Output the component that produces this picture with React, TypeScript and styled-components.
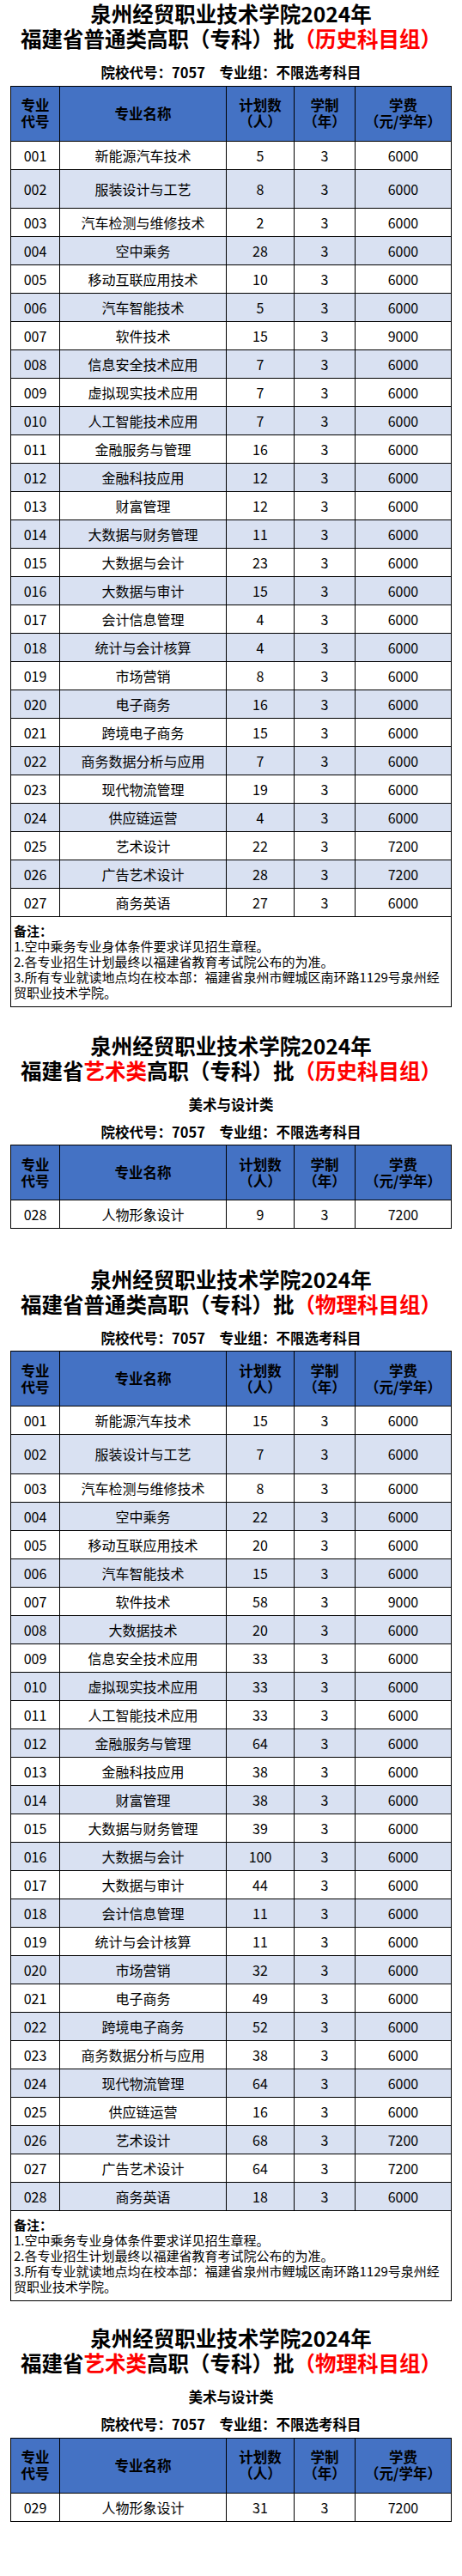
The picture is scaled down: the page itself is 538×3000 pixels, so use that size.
import { FC, ReactNode } from "react";
import styled, { createGlobalStyle } from "styled-components";

const GlobalStyle = createGlobalStyle`
  html, body {
    margin: 0;
    padding: 0;
    background: #fff;
  }
  body {
    font-family: "Noto Sans CJK SC", "Noto Sans", sans-serif;
    color: #000;
  }
`;

const Page = styled.div`
  width: 538px;
  padding-bottom: 68px;
`;

const Section = styled.section<{ $gap: number }>`
  margin-top: ${(p) => p.$gap}px;
`;

const Title = styled.h1`
  margin: 0;
  font-size: 24.5px;
  line-height: 29px;
  font-weight: 700;
  text-align: center;
  white-space: nowrap;
`;

const TitleLine = styled.div``;

const Red = styled.span`
  color: #ff0000;
`;

const Category = styled.div`
  margin-top: 13px;
  font-size: 16.5px;
  line-height: 24px;
  font-weight: 700;
  text-align: center;
`;

const Subtitle = styled.div<{ $afterCategory?: boolean }>`
  margin-top: ${(p) => (p.$afterCategory ? 8 : 13)}px;
  font-size: 16.5px;
  line-height: 24px;
  font-weight: 700;
  text-align: center;
  white-space: pre;
`;

const Table = styled.table`
  margin: 3.5px auto 0;
  width: 513px;
  table-layout: fixed;
  border-collapse: collapse;
`;

const HeadRow = styled.tr`
  height: 64px;
  background: #4472c4;
`;

const HeadCell = styled.th`
  border: 1px solid #000;
  padding: 0;
  font-size: 16.5px;
  line-height: 19px;
  font-weight: 700;
  text-align: center;
  vertical-align: middle;
`;

const Row = styled.tr<{ $shaded: boolean; $tall: boolean }>`
  height: ${(p) => (p.$tall ? 45.5 : 33)}px;
  background: ${(p) => (p.$shaded ? "#d9e1f2" : "#fff")};
`;

const Cell = styled.td`
  border: 1px solid #000;
  padding: 0;
  font-size: 16px;
  line-height: 20px;
  text-align: center;
  vertical-align: middle;
  white-space: nowrap;
`;

const NotesCell = styled.td`
  border: 1px solid #000;
  height: 105px;
  padding: 0 4px 0 3px;
  font-size: 15px;
  line-height: 18px;
  text-align: left;
  vertical-align: middle;
  box-sizing: border-box;
`;

const NotesHead = styled.div`
  font-weight: 700;
`;

const NoteLine = styled.div``;

type Major = [string, number, number];

const historyMajors: Major[] = [
  ["新能源汽车技术", 5, 6000],
  ["服装设计与工艺", 8, 6000],
  ["汽车检测与维修技术", 2, 6000],
  ["空中乘务", 28, 6000],
  ["移动互联应用技术", 10, 6000],
  ["汽车智能技术", 5, 6000],
  ["软件技术", 15, 9000],
  ["信息安全技术应用", 7, 6000],
  ["虚拟现实技术应用", 7, 6000],
  ["人工智能技术应用", 7, 6000],
  ["金融服务与管理", 16, 6000],
  ["金融科技应用", 12, 6000],
  ["财富管理", 12, 6000],
  ["大数据与财务管理", 11, 6000],
  ["大数据与会计", 23, 6000],
  ["大数据与审计", 15, 6000],
  ["会计信息管理", 4, 6000],
  ["统计与会计核算", 4, 6000],
  ["市场营销", 8, 6000],
  ["电子商务", 16, 6000],
  ["跨境电子商务", 15, 6000],
  ["商务数据分析与应用", 7, 6000],
  ["现代物流管理", 19, 6000],
  ["供应链运营", 4, 6000],
  ["艺术设计", 22, 7200],
  ["广告艺术设计", 28, 7200],
  ["商务英语", 27, 6000],
];

const physicsMajors: Major[] = [
  ["新能源汽车技术", 15, 6000],
  ["服装设计与工艺", 7, 6000],
  ["汽车检测与维修技术", 8, 6000],
  ["空中乘务", 22, 6000],
  ["移动互联应用技术", 20, 6000],
  ["汽车智能技术", 15, 6000],
  ["软件技术", 58, 9000],
  ["大数据技术", 20, 6000],
  ["信息安全技术应用", 33, 6000],
  ["虚拟现实技术应用", 33, 6000],
  ["人工智能技术应用", 33, 6000],
  ["金融服务与管理", 64, 6000],
  ["金融科技应用", 38, 6000],
  ["财富管理", 38, 6000],
  ["大数据与财务管理", 39, 6000],
  ["大数据与会计", 100, 6000],
  ["大数据与审计", 44, 6000],
  ["会计信息管理", 11, 6000],
  ["统计与会计核算", 11, 6000],
  ["市场营销", 32, 6000],
  ["电子商务", 49, 6000],
  ["跨境电子商务", 52, 6000],
  ["商务数据分析与应用", 38, 6000],
  ["现代物流管理", 64, 6000],
  ["供应链运营", 16, 6000],
  ["艺术设计", 68, 7200],
  ["广告艺术设计", 64, 7200],
  ["商务英语", 18, 6000],
];

const code = (n: number) => String(n).padStart(3, "0");

const Notes: FC = () => (
  <tr>
    <NotesCell colSpan={5}>
      <NotesHead>备注：</NotesHead>
      <NoteLine>1.空中乘务专业身体条件要求详见招生章程。</NoteLine>
      <NoteLine>2.各专业招生计划最终以福建省教育考试院公布的为准。</NoteLine>
      <NoteLine>
        3.所有专业就读地点均在校本部：福建省泉州市鲤城区南环路1129号泉州经贸职业技术学院。
      </NoteLine>
    </NotesCell>
  </tr>
);

type PlanTableProps = {
  majors: Major[];
  startCode?: number;
  notes?: boolean;
};

const PlanTable: FC<PlanTableProps> = ({ majors, startCode = 1, notes }) => (
  <Table>
    <colgroup>
      <col style={{ width: 57 }} />
      <col style={{ width: 194 }} />
      <col style={{ width: 79 }} />
      <col style={{ width: 71 }} />
      <col style={{ width: 112 }} />
    </colgroup>
    <thead>
      <HeadRow>
        <HeadCell>
          专业
          <br />
          代号
        </HeadCell>
        <HeadCell>专业名称</HeadCell>
        <HeadCell>
          计划数
          <br />
          （人）
        </HeadCell>
        <HeadCell>
          学制
          <br />
          （年）
        </HeadCell>
        <HeadCell>
          学费
          <br />
          （元/学年）
        </HeadCell>
      </HeadRow>
    </thead>
    <tbody>
      {majors.map(([name, plan, fee], i) => (
        <Row key={name} $shaded={i % 2 === 1} $tall={majors.length > 1 && i === 1}>
          <Cell>{code(startCode + i)}</Cell>
          <Cell>{name}</Cell>
          <Cell>{plan}</Cell>
          <Cell>3</Cell>
          <Cell>{fee}</Cell>
        </Row>
      ))}
      {notes && <Notes />}
    </tbody>
  </Table>
);

type HeaderProps = {
  kind: ReactNode;
  group: string;
};

const Heading: FC<HeaderProps> = ({ kind, group }) => (
  <Title>
    <TitleLine>泉州经贸职业技术学院2024年</TitleLine>
    <TitleLine>
      福建省{kind}高职（专科）批<Red>（{group}）</Red>
    </TitleLine>
  </Title>
);

const SCHOOL = "院校代号：7057　专业组：不限选考科目";

export default function App() {
  return (
    <Page>
      <GlobalStyle />
      <Section $gap={1}>
        <Heading kind="普通类" group="历史科目组" />
        <Subtitle>{SCHOOL}</Subtitle>
        <PlanTable majors={historyMajors} notes />
      </Section>

      <Section $gap={29.5}>
        <Heading kind={<Red>艺术类</Red>} group="历史科目组" />
        <Category>美术与设计类</Category>
        <Subtitle $afterCategory>{SCHOOL}</Subtitle>
        <PlanTable majors={[["人物形象设计", 9, 7200]]} startCode={28} />
      </Section>

      <Section $gap={43.5}>
        <Heading kind="普通类" group="物理科目组" />
        <Subtitle>{SCHOOL}</Subtitle>
        <PlanTable majors={physicsMajors} notes />
      </Section>

      <Section $gap={28.5}>
        <Heading kind={<Red>艺术类</Red>} group="物理科目组" />
        <Category>美术与设计类</Category>
        <Subtitle $afterCategory>{SCHOOL}</Subtitle>
        <PlanTable majors={[["人物形象设计", 31, 7200]]} startCode={29} />
      </Section>
    </Page>
  );
}
